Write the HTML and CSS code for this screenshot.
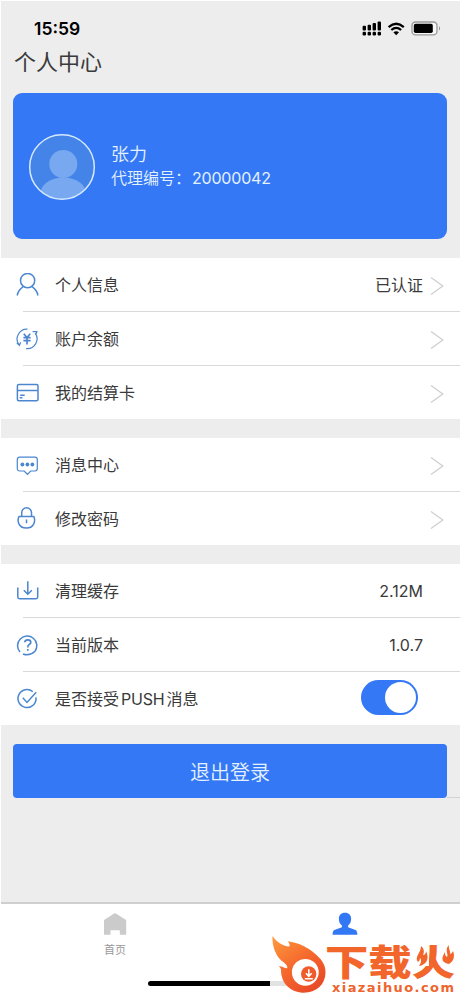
FILE: index.html
```html
<!DOCTYPE html>
<html lang="zh-CN">
<head>
<meta charset="utf-8">
<title>个人中心</title>
<link rel="stylesheet" href="styles.css">
</head>
<body>
<div class="screen">
  <header class="status">
    <span class="time">15:59</span>
    <svg class="status-icons" width="80" height="18" viewBox="0 0 80 18">
      <g fill="#000">
        <rect x="0.6" y="5.8" width="3.4" height="4.6" rx="1"/><rect x="5.6" y="4.7" width="3.4" height="5.7" rx="1"/><rect x="10.6" y="3" width="3.4" height="7.4" rx="1"/><rect x="15.6" y="1.4" width="3.4" height="9" rx="1"/>
        <rect x="0.6" y="11.8" width="3.4" height="3.6" rx="1.2"/><rect x="5.6" y="11.8" width="3.4" height="3.6" rx="1.2"/><rect x="10.6" y="11.8" width="3.4" height="3.6" rx="1.2"/><rect x="15.6" y="11.8" width="3.4" height="3.6" rx="1.2"/>
        <path d="M31.4 12.3Q34.2 10 37 12.3L34.2 15.2Z"/>
      </g>
      <path d="M26.6 7.1Q34.2 0.5 41.8 7.1M29.3 10Q34.2 5.8 39.1 10" fill="none" stroke="#000" stroke-width="2.3"/>
      <rect x="50" y="2" width="25" height="12.8" rx="3.6" fill="#f7f7f7" stroke="#999" stroke-width="1.3"/>
      <rect x="51.8" y="3.8" width="19" height="9.2" rx="1.8"/>
      <path d="M77 6.2Q79 8.4 77 10.6Z" fill="#888"/>
    </svg>
  </header>
  <h1 class="title">个人中心</h1>

  <section class="profile">
    <svg class="avatar" width="68" height="68" viewBox="0 0 68 68">
      <defs><clipPath id="face"><circle cx="34" cy="34" r="32"/></clipPath></defs>
      <circle cx="34" cy="34" r="32.4" fill="#4484e8"/>
      <g clip-path="url(#face)" fill="#78a9f0"><circle cx="35.3" cy="31" r="14"/><ellipse cx="35.3" cy="61" rx="23" ry="16.5"/></g>
      <circle cx="34" cy="34" r="32.3" fill="none" stroke="#d5e9ff" stroke-width="1.5"/>
    </svg>
    <div class="who">
      <div class="name">张力</div>
      <div class="agent">代理编号：<span class="num">20000042</span></div>
    </div>
  </section>

  <section class="group">
    <div class="row">
      <svg class="icon" viewBox="0 0 24 24"><circle cx="12.6" cy="7.6" r="7.1"/><path d="M2.2 22.5Q3.2 17 8.2 13.7M17 13.7Q22 17 22.9 22.5"/></svg>
      <span class="label">个人信息</span><span class="value">已认证</span>
      <svg class="chevron" viewBox="0 0 14 20"><path d="M1 1.5L12.8 10L1 18.5"/></svg>
    </div>
    <div class="row">
      <svg class="icon thin" viewBox="0 0 24 24"><path d="M12.5 2.2A9.8 9.8 0 0 0 4.2 18M1.8 15.8L4.4 18.5L5.6 15.3M11 21.6A9.8 9.8 0 0 0 20.2 6.2M17.6 4.6H21.9L20.6 8.2"/><path class="bold" d="M8.8 6.8L12 10.5L15.2 6.8M8.4 10.7H15.6M8.4 13.6H15.6M12 10.5V17.4"/></svg>
      <span class="label">账户余额</span>
      <svg class="chevron" viewBox="0 0 14 20"><path d="M1 1.5L12.8 10L1 18.5"/></svg>
    </div>
    <div class="row">
      <svg class="icon" viewBox="0 0 24 24"><rect x="2.4" y="3.6" width="20.6" height="16.2" rx="1.5"/><path d="M2.7 9.4H22.7M5.2 14.2H9.7M4.7 16.8H7.4"/></svg>
      <span class="label">我的结算卡</span>
      <svg class="chevron" viewBox="0 0 14 20"><path d="M1 1.5L12.8 10L1 18.5"/></svg>
    </div>
  </section>

  <section class="group">
    <div class="row">
      <svg class="icon thin" viewBox="0 0 24 24"><path d="M4.7 4.2H20Q22.3 4.2 22.3 6.5V15.6Q22.3 18 20 18H15.7L12.5 21.3L9.1 18H4.7Q2.3 18 2.3 15.6V6.5Q2.3 4.2 4.7 4.2Z"/><g class="solid"><circle cx="7.4" cy="11.5" r="1.9"/><circle cx="12.4" cy="11.5" r="1.9"/><circle cx="17.4" cy="11.5" r="1.9"/></g></svg>
      <span class="label">消息中心</span>
      <svg class="chevron" viewBox="0 0 14 20"><path d="M1 1.5L12.8 10L1 18.5"/></svg>
    </div>
    <div class="row">
      <svg class="icon" viewBox="0 0 24 24"><path d="M6.7 9.2V5.7A4.9 4.9 0 0 1 16.5 5.7V9.2M4 9.6H18.8Q20.4 12.8 18.9 16.6Q17 21 11.4 21Q5.7 21 3.8 16.6Q2.3 12.8 4 9.6ZM11.5 12.5V16.2"/></svg>
      <span class="label">修改密码</span>
      <svg class="chevron" viewBox="0 0 14 20"><path d="M1 1.5L12.8 10L1 18.5"/></svg>
    </div>
  </section>

  <section class="group">
    <div class="row">
      <svg class="icon" viewBox="0 0 24 24"><path d="M2.8 8.5V18Q2.8 19.7 4.5 19.7H21Q22.7 19.7 22.7 18V8.5M12.8 2.2V14.6M8.8 11.2L12.8 15.2L16.8 11.2"/></svg>
      <span class="label">清理缓存</span><span class="value end">2.12M</span>
    </div>
    <div class="row">
      <svg class="icon" viewBox="0 0 24 24"><path d="M5 19A9.6 9.6 0 1 1 20 18.2Q14.5 23.5 8 21"/><path class="bold" d="M9.8 9.2Q10 6.8 12.8 6.8Q15.8 6.8 15.8 9.3Q15.8 10.7 14.2 11.5Q12.8 12.3 12.8 14.4M12.8 16V17.7"/></svg>
      <span class="label">当前版本</span><span class="value end">1.0.7</span>
    </div>
    <div class="row">
      <svg class="icon" viewBox="0 0 24 24"><path d="M17.8 4.7A9 9 0 1 0 20.9 10.3M7.8 10.8L12 15.4L21.2 5.2"/></svg>
      <span class="label">是否接受<span class="push">PUSH</span>消息</span>
      <span class="toggle"><span class="knob"></span></span>
    </div>
  </section>

  <div class="logout-wrap"><button class="logout">退出登录</button><span class="hairline"></span></div>

  <nav class="tabs">
    <div class="tab">
      <svg width="24" height="24" viewBox="0 0 24 24"><path d="M12 1L23.2 8V22.8H16.8V18.2H7.5V22.8H1V8Z" fill="#cbcbcb"/></svg>
      <span class="tab-name">首页</span>
    </div>
    <div class="tab">
      <svg width="26" height="24" viewBox="0 0 26 24"><path d="M13 .8C17 .8 19.3 3.3 19.1 7.2C19 10 17.9 12.2 16.1 13.4V15.2L23.5 18Q25.2 18.8 25.4 22.8H.5Q.7 18.8 2.4 18L9.9 15.2V13.4C8 12.2 7 10 6.9 7.2C6.7 3.3 9 .8 13 .8Z" fill="#3278f5"/></svg>
    </div>
    <div class="home-bar"></div>
    <svg class="watermark" width="190" height="66" viewBox="270 930 190 66">
      <defs><linearGradient id="flame" x1="0" y1="0" x2=".7" y2="1"><stop offset="0" stop-color="#ff9b3d"/><stop offset=".55" stop-color="#f5682d"/><stop offset="1" stop-color="#e94a27"/></linearGradient></defs>
      <path d="M272.5 936C277 942.5 282 945 288 946.5C290.5 947 290 943.5 287.6 941.2C299 942.5 309 948 316.5 955C322 960 325.7 965 325.5 973C325 985 316 993 303 992.7C290 992 281 983 281 970C281 968.5 280 967 278.7 966.2C282 965.8 284.5 968 286.5 968.3C289.5 967.5 284.5 962.5 281.5 960.8C275.5 955 272 946 272.5 936Z" fill="url(#flame)"/>
      <circle cx="305.3" cy="972.3" r="13.4" fill="#fff"/><circle cx="308.7" cy="974" r="7.7" fill="#ef5b2b"/>
      <path d="M308.8 969.2V975.5M305.9 973.3L308.8 976.3L311.7 973.3M304.8 978.8H312.8" fill="none" stroke="#fff" stroke-width="1.6"/>
      <text class="wm-cn" x="325" y="976" textLength="130" lengthAdjust="spacingAndGlyphs">下载火</text>
      <path d="M414 945H429V966H414ZM441 945H456V964H441Z" fill="#fff"/>
      <path d="M421 946C425 949 424 953 423 955C425 955 426 953 426 951C430 959 426 965 419 966C421 963 422 960 420 958C420 960 419 961 418 962C414 957 421 953 421 946ZM449 945C444 950 449 954 447 957C445 956 445 954 445 952C440 960 443 963 449 964C454 961 455 956 453 951C452 953 451 954 450 954C451 951 448 949 449 945Z" fill="#f2652b"/>
      <text class="wm-url" x="332" y="991.5" textLength="122" lengthAdjust="spacing">xiazaihuo.com</text>
    </svg>
  </nav>
</div>
</body>
</html>
```
FILE: styles.css
```css
* { box-sizing: border-box; }
body {
  margin: 0;
  background: #fff;
  color: #3a3a3a;
  font-family: Inter, "Noto Sans CJK SC", sans-serif;
}
.screen {
  display: flex;
  flex-direction: column;
  width: 459px;
  height: 995px;
  margin: 1px 0 0 1px;
  background: #ededed;
}
.status {
  display: flex;
  justify-content: space-between;
  align-items: center;
  height: 49px;
  padding: 6px 18px 0 33px;
}
.time {
  font-size: 17.5px;
  font-weight: 600;
  line-height: 20px;
  color: #000;
}
.title {
  margin: 0 0 0 13px;
  height: 43px;
  font-size: 22px;
  font-weight: 400;
  line-height: 25px;
}
.profile {
  display: flex;
  align-items: flex-start;
  width: 434px;
  height: 146px;
  margin-left: 12px;
  padding: 40px 0 0 15px;
  border-radius: 9px;
  background: #3478f6;
  color: #e4f2ff;
}
.who { margin: 9px 0 0 15px; }
.name { font-size: 18px; line-height: 25px; font-weight: 350; }
.agent { font-size: 16px; line-height: 22px; font-weight: 350; }
.num { margin-left: 1px; font-weight: 400; letter-spacing: -0.2px; }
.group {
  margin-top: 19px;
  background: #fff;
}
.row {
  position: relative;
  display: flex;
  align-items: center;
  height: 54px;
  padding: 0 16px 0 14px;
}
.group .row:last-child { height: 53px; }
.row + .row::before {
  content: "";
  position: absolute;
  top: -1px;
  left: 22px;
  right: 0;
  height: 1px;
  background: #d9d9d9;
}
.icon {
  width: 24px;
  height: 24px;
  margin-right: 16px;
  fill: none;
  stroke: #4b86cf;
  stroke-width: 1.5;
}
.thin { stroke-width: 1.2; }
.bold { stroke-width: 1.7; }
.solid { fill: #4b86cf; stroke: none; }
.label {
  font-size: 16px;
  line-height: 24px;
}
.push { letter-spacing: -0.2px; margin: 0 2px; }
.value {
  margin-left: auto;
  font-size: 16px;
  line-height: 24px;
}
.end { margin-right: 21px; }
.chevron {
  width: 14px;
  height: 20px;
  margin: 2px 0 0 auto;
  fill: none;
  stroke: #cfcfcf;
  stroke-width: 1.3;
}
.value + .chevron { margin-left: 7px; }
.toggle {
  display: flex;
  justify-content: flex-end;
  width: 57px;
  height: 35px;
  margin: -3px 26px 0 auto;
  padding: 2px;
  border-radius: 18px;
  background: #3478f6;
}
.knob {
  width: 31px;
  height: 31px;
  border-radius: 50%;
  background: #fff;
}
.logout-wrap {
  display: flex;
  align-items: flex-end;
  margin: 19px 0 0 12px;
}
.logout {
  width: 434px;
  height: 54px;
  padding: 0;
  border: 0;
  border-radius: 4px;
  background: #3478f6;
  color: #e4f2ff;
  font: 350 20px "Noto Sans CJK SC", sans-serif;
}
.hairline { flex: 1; height: 1px; background: #d2d2d2; }
.tabs {
  position: relative;
  display: flex;
  height: 94px;
  margin-top: auto;
  padding-top: 8px;
  border-top: 2px solid #cfcfcf;
  background: #fff;
}
.tab {
  display: flex;
  flex: 1;
  flex-direction: column;
  align-items: center;
}
.tab:first-child { margin-left: -1px; }
.tab-name {
  margin-top: 6px;
  font-size: 11px;
  line-height: 16px;
  color: #999;
}
.home-bar {
  position: absolute;
  left: 147px;
  bottom: 10px;
  width: 165px;
  height: 5px;
  border-radius: 3px;
  background: linear-gradient(90deg, #000 122px, #e2e2e2 122px);
}
.watermark {
  position: absolute;
  right: 0;
  bottom: 0;
}
.wm-cn {
  fill: #f2652b;
  font: 900 36px "Noto Sans CJK SC", sans-serif;
}
.wm-url {
  fill: #ef642d;
  font: 700 13px "DejaVu Sans", sans-serif;
}
```
